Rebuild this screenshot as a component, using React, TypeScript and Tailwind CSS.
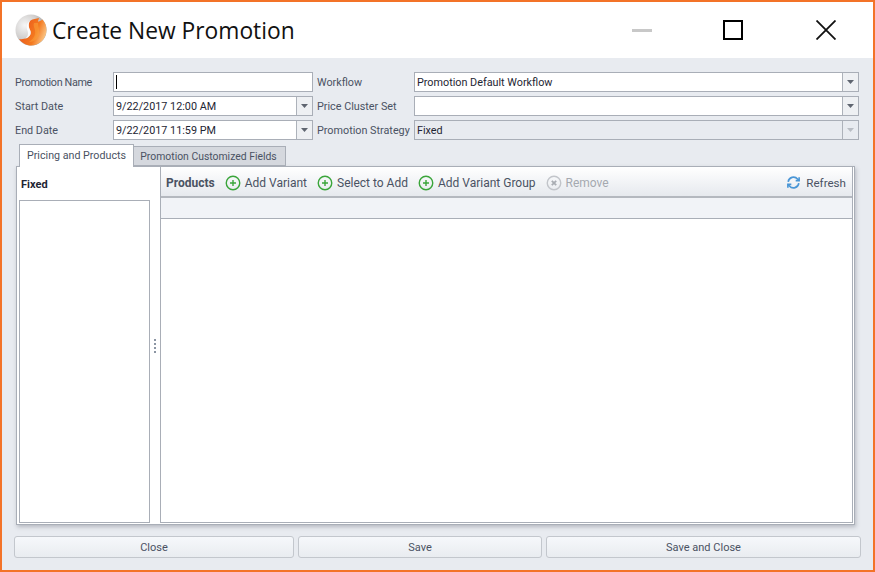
const FONT = "font-['Roboto',sans-serif]";

const Arrow = ({ disabled }: { disabled?: boolean }) => (
  <div
    className={`flex w-4 shrink-0 items-center justify-center self-stretch border-l border-[#adb2ba] ${
      disabled ? "bg-[#e8ebf0]" : "bg-[#eef0f3]"
    }`}
  >
    <svg width="7" height="4" viewBox="0 0 7 4">
      <path d="M0 0h7L3.5 4z" fill={disabled ? "#b9bdc4" : "#5f6570"} />
    </svg>
  </div>
);

const Field = ({
  value,
  arrow,
  disabled,
  caret,
}: {
  value?: string;
  arrow?: boolean;
  disabled?: boolean;
  caret?: boolean;
}) => (
  <div
    className={`flex h-5 items-center border border-[#a9aeb7] text-[10.8px] text-[#1e2533] ${
      disabled ? "bg-[#e8ebf0]" : "bg-white"
    }`}
  >
    <div className="flex flex-1 items-center pt-[2px] pl-[2px] whitespace-nowrap">
      {caret && <span className="-mt-[2px] h-[14px] w-px bg-black" />}
      {value}
    </div>
    {arrow && <Arrow disabled={disabled} />}
  </div>
);

const Label = ({ children, className }: { children: string; className?: string }) => (
  <div className={`flex h-5 items-center pt-[2px] text-[10.8px] whitespace-nowrap text-[#4a5263] ${className ?? ""}`}>
    {children}
  </div>
);

const AddIcon = ({ disabled }: { disabled?: boolean }) => (
  <svg width="16" height="16" viewBox="0 0 16 16" className="shrink-0">
    <circle cx="8" cy="8" r="6.75" fill="none" stroke={disabled ? "#c2c5ca" : "#3aa53a"} strokeWidth="1.4" />
    {disabled ? (
      <path d="M5.8 5.8l4.4 4.4M10.2 5.8l-4.4 4.4" stroke="#a9adb3" strokeWidth="1.8" />
    ) : (
      <path d="M8 5v6M5 8h6" stroke="#3aa53a" strokeWidth="1.4" />
    )}
  </svg>
);

const ToolButton = ({ label, disabled }: { label: string; disabled?: boolean }) => (
  <div className={`flex items-center gap-[4px] text-[12px] ${disabled ? "text-[#a5a9b0]" : "text-[#4a5263]"}`}>
    <AddIcon disabled={disabled} />
    <span className="pt-px whitespace-nowrap">{label}</span>
  </div>
);

const Logo = () => (
  <svg width="32" height="32" viewBox="0 0 32 32" className="shrink-0">
    <defs>
      <radialGradient id="ball" cx="30%" cy="35%" r="80%">
        <stop offset="0%" stopColor="#f6f6f6" />
        <stop offset="55%" stopColor="#cfcdcc" />
        <stop offset="100%" stopColor="#8f8b89" />
      </radialGradient>
      <linearGradient id="swoosh" x1="0" y1="0.2" x2="1" y2="0.6">
        <stop offset="0%" stopColor="#e8501c" />
        <stop offset="65%" stopColor="#f47a20" />
        <stop offset="100%" stopColor="#fbc98a" />
      </linearGradient>
    </defs>
    <circle cx="16" cy="16" r="15.5" fill="url(#ball)" />
    <path
      d="M24 4C21 5 18 5 15.500 6.500 13 9 13.500 13 15 16c1.500 3 .5 6-3 8-2.500 1-5 1.500-8 1 3 4 7.500 6.500 12 6.500 8.500 0 15.500-7 15.500-15.500 0-4-1.500-8-4-10.500-2 1.500-3.500 2-4.500 2z"
      fill="url(#swoosh)"
    />
    <path d="M15.500 6.500C13 9 13.500 13 15 16c1.500 3 .5 6-3 8l-2 .8c3-2 3.500-5 2.500-8C11 13 11.500 9 15.500 6.500z" fill="#fff" opacity=".85" />
    <path d="M19 9c-1.500 3 2 6 1 11-.5 3-3 6-6 8 5 0 9-3 10-8 .8-4-1-8-1-11z" fill="#f9a13a" opacity=".55" />
  </svg>
);

const FooterButton = ({ label, className }: { label: string; className: string }) => (
  <button
    className={`h-[22px] rounded-[3px] border border-[#c3c7cd] bg-gradient-to-b from-[#f6f8fb] to-[#e9ecf0] pt-[2px] text-[11px] text-[#4a5263] ${className}`}
  >
    {label}
  </button>
);

export default function App() {
  return (
    <div className={`flex h-[572px] w-[875px] flex-col border-2 border-[#f37328] bg-[#e8ebf0] ${FONT}`}>
      {/* title bar */}
      <div className="flex h-[56px] shrink-0 items-center bg-white pl-[13px]">
        <Logo />
        <div className="mt-[2px] ml-[5px] font-['Open_Sans',sans-serif] text-[22.8px] text-[#111]">Create New Promotion</div>
        <div className="ml-auto flex items-center">
          <div className="h-[3px] w-5 bg-[#c8c8c8]" />
          <div className="ml-[71px] h-5 w-5 border-2 border-black" />
          <svg width="20" height="20" viewBox="0 0 20 20" className="mr-[37px] ml-[73px] text-[#111]">
            <path d="M0.500 0.500l19 19M19.500 0.500l-19 19" stroke="currentColor" strokeWidth="1.800" />
          </svg>
        </div>
      </div>

      <div className="flex flex-1 flex-col px-3 pt-[14px]">
        {/* form */}
        <div className="ml-px grid grid-cols-[98px_200px_101px_445px] gap-y-1">
          <Label className="tracking-[-0.35px]">Promotion Name</Label>
          <Field caret />
          <Label className="pl-1">Workflow</Label>
          <Field value="Promotion Default Workflow" arrow />
          <Label>Start Date</Label>
          <Field value="9/22/2017 12:00 AM" arrow />
          <Label className="pl-1">Price Cluster Set</Label>
          <Field arrow />
          <Label>End Date</Label>
          <Field value="9/22/2017 11:59 PM" arrow />
          <Label className="pl-1">Promotion Strategy</Label>
          <Field value="Fixed" arrow disabled />
        </div>

        {/* tabs */}
        <div className="relative z-10 mt-1 ml-[5px] flex h-[23px] items-end">
          <div className="flex h-[23px] w-[115px] items-center justify-center border border-b-0 border-[#a9aeb7] bg-white text-[10.7px] whitespace-nowrap text-[#4a5263]">
            Pricing and Products
          </div>
          <div className="mb-px flex h-5 w-[152px] items-center justify-center border border-l-0 border-[#a9aeb7] bg-[#d5d8de] pt-[2px] pr-[2px] text-[10.4px] whitespace-nowrap text-[#4a5263]">
            Promotion Customized Fields
          </div>
        </div>

        {/* panel */}
        <div className="-mt-px ml-[2px] flex h-[359px] w-[839px] border border-[#a9aeb7] bg-white pr-px shadow-[1px_2px_4px_rgba(120,125,135,0.45)]">
          <div className="ml-[2px] flex w-[131px] shrink-0 flex-col">
            <div className="flex h-[33px] shrink-0 items-center pt-[4px] pl-[2px] text-[11px] font-bold text-[#1e2533]">Fixed</div>
            <div className="mb-px flex-1 border border-[#a9aeb7]" />
          </div>

          <div className="flex w-[10px] shrink-0 flex-col items-center justify-center gap-[2px]">
            <div className="h-[2px] w-[2px] bg-[#8b95a3]" />
            <div className="h-[2px] w-[2px] bg-[#8b95a3]" />
            <div className="h-[2px] w-[2px] bg-[#8b95a3]" />
            <div className="h-[2px] w-[2px] bg-[#8b95a3]" />
          </div>

          <div className="mb-px flex flex-1 flex-col border-x border-b border-[#a9aeb7]">
            <div className="flex h-[31px] shrink-0 items-center border-b-2 border-[#b4b8bf] bg-gradient-to-b from-white to-[#e6e9ee] pt-[2px] pr-[6px] pl-[5px]">
              <span className="mr-[10px] pt-px text-[12px] font-bold text-[#4a5263]">Products</span>
              <div className="flex items-center gap-[10px]">
                <ToolButton label="Add Variant" />
                <ToolButton label="Select to Add" />
                <ToolButton label="Add Variant Group" />
                <ToolButton label="Remove" disabled />
              </div>
              <div className="ml-auto flex items-center gap-[5px] text-[11.6px] text-[#4a5263]">
                <svg width="15" height="15" viewBox="0 0 24 24" fill="none" stroke="#4a96d6" strokeWidth="2.600">
                  <path d="M3.500 11a8.500 8.500 0 0 1 15-4.500L21 9" />
                  <path d="M20.500 13a8.500 8.500 0 0 1-15 4.500L3 15" />
                  <path d="M21 3.500V9h-5.500M3 20.500V15h5.500" />
                </svg>
                <span className="pt-[2px]">Refresh</span>
              </div>
            </div>
            <div className="h-[21px] shrink-0 border-b border-[#a9aeb7] bg-[#f1f3f7]" />
            <div className="flex-1 bg-white" />
          </div>
        </div>

        {/* footer */}
        <div className="mt-[11px] flex gap-1">
          <FooterButton label="Close" className="w-[280px]" />
          <FooterButton label="Save" className="w-[244px]" />
          <FooterButton label="Save and Close" className="w-[315px]" />
        </div>
      </div>
    </div>
  );
}
